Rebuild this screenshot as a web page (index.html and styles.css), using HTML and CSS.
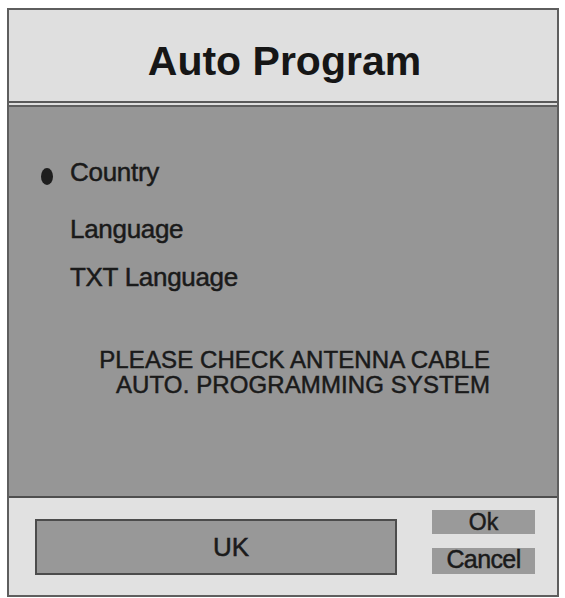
FILE: index.html
```html
<!DOCTYPE html>
<html lang="en">
<head>
<meta charset="utf-8">
<title>Auto Program</title>
<link rel="stylesheet" href="styles.css">
</head>
<body>
<div class="frame">
  <div class="header">
    <h1 class="title">Auto Program</h1>
  </div>
  <div class="panel">
    <ul class="menu">
      <li class="item selected"><span class="dot"></span><span class="label">Country</span></li>
      <li class="item"><span class="dot"></span><span class="label">Language</span></li>
      <li class="item"><span class="dot"></span><span class="label">TXT Language</span></li>
    </ul>
    <div class="message">
      <div>PLEASE CHECK ANTENNA CABLE</div>
      <div>AUTO. PROGRAMMING SYSTEM</div>
    </div>
  </div>
  <div class="footer">
    <div class="value">UK</div>
    <div class="buttons">
      <div class="btn btn-ok">Ok</div>
      <div class="btn btn-cancel">Cancel</div>
    </div>
  </div>
</div>
</body>
</html>
```
FILE: styles.css
```css
html, body {
  margin: 0;
  padding: 0;
  background: #ffffff;
}
body {
  font-family: "Liberation Sans", Arial, sans-serif;
  color: #1b1b1b;
}
.frame {
  box-sizing: border-box;
  margin: 8px 0 0 7px;
  width: 552px;
  height: 589px;
  border: 2px solid #5e5e5e;
  background: #dedede;
  display: flex;
  flex-direction: column;
}
.header {
  height: 93px;
  border-bottom: 2px solid #5a5a5a;
  background: #dfdfdf;
  display: flex;
  align-items: center;
  justify-content: center;
  padding-top: 12px;
  box-sizing: border-box;
  flex: none;
}
.title {
  margin: 0 0 0 3px;
  font-size: 41px;
  font-weight: bold;
  color: #161616;
}
.panel {
  margin-top: 2px;
  height: 393px;
  box-sizing: border-box;
  border-top: 2px solid #5e5e5e;
  border-bottom: 2px solid #4e4e4e;
  background: #969696;
  padding-top: 50px;
  flex: none;
}
.menu {
  list-style: none;
  margin: 0;
  padding: 0;
  display: flex;
  flex-direction: column;
  gap: 18px;
}
.item {
  display: flex;
  align-items: flex-start;
  height: 30px;
  font-size: 26px;
  line-height: 30px;
  letter-spacing: -0.3px;
  color: #1a1a1a;
  -webkit-text-stroke: 0.5px #1a1a1a;
}
.item.selected {
  margin-bottom: 9px;
}
.dot {
  width: 12px;
  height: 17px;
  margin: 11px 17px 0 32px;
  border-radius: 50%;
  background: #1e1e1e;
  visibility: hidden;
  flex: none;
}
.selected .dot {
  visibility: visible;
}
.message {
  margin-top: 55px;
  padding-right: 67px;
  text-align: right;
  font-size: 24px;
  line-height: 25px;
  letter-spacing: 0.1px;
  color: #1a1a1a;
  -webkit-text-stroke: 0.5px #1a1a1a;
}
.footer {
  flex: 1;
  background: #e1e1e1;
  display: flex;
  align-items: flex-start;
  padding-left: 26px;
}
.value {
  box-sizing: border-box;
  margin-top: 21px;
  width: 362px;
  height: 56px;
  border: 2px solid #4c4c4c;
  background: #989898;
  display: flex;
  align-items: center;
  justify-content: center;
  padding-left: 30px;
  font-size: 26px;
  -webkit-text-stroke: 0.5px #1b1b1b;
}
.buttons {
  margin: 12px 0 0 35px;
  width: 103px;
  display: flex;
  flex-direction: column;
  gap: 14px;
}
.btn {
  background: #9a9a9a;
  display: flex;
  align-items: center;
  justify-content: center;
  -webkit-text-stroke: 0.5px #1b1b1b;
}
.btn-ok {
  height: 24px;
  font-size: 23px;
}
.btn-cancel {
  height: 26px;
  font-size: 25px;
  letter-spacing: -0.6px;
  padding-bottom: 4px;
  box-sizing: border-box;
}
```
